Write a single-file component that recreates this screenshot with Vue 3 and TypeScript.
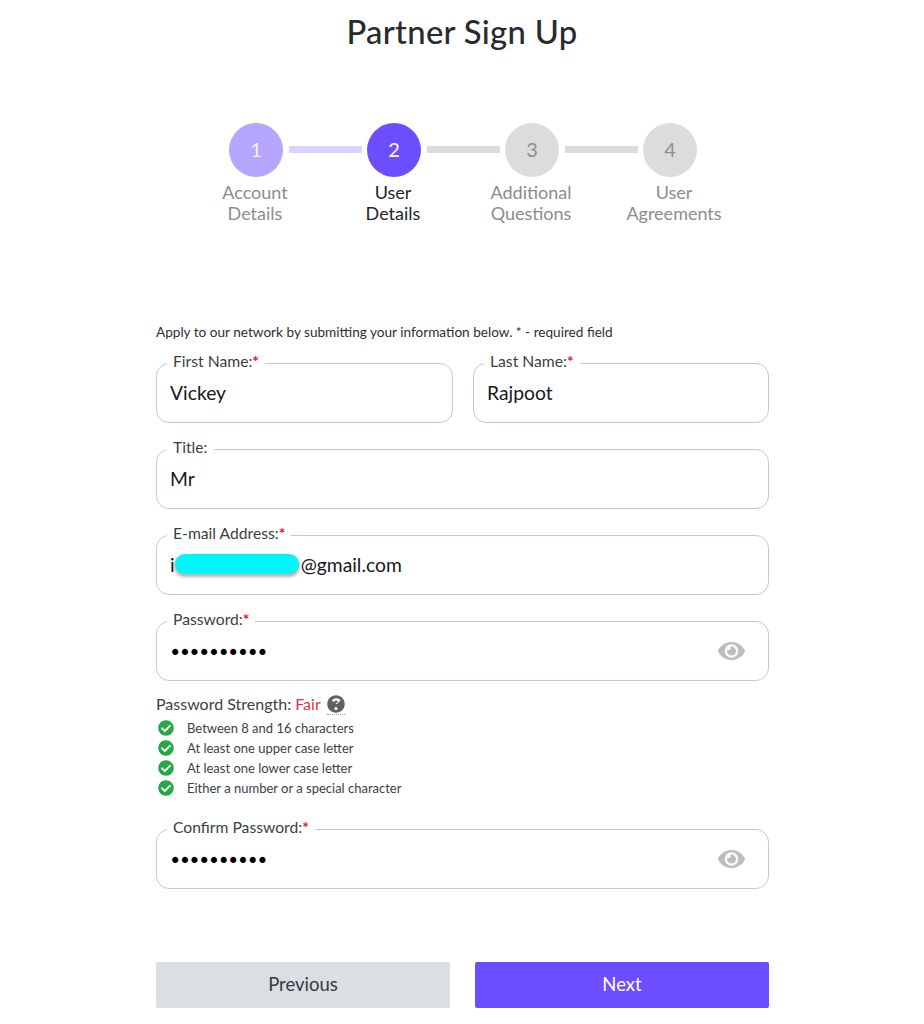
<script setup lang="ts">
const steps = [
  { n: 1, lines: ['Account', 'Details'], state: 'done' },
  { n: 2, lines: ['User', 'Details'], state: 'active' },
  { n: 3, lines: ['Additional', 'Questions'], state: 'todo' },
  { n: 4, lines: ['User', 'Agreements'], state: 'todo' },
]
const rules = [
  'Between 8 and 16 characters',
  'At least one upper case letter',
  'At least one lower case letter',
  'Either a number or a special character',
]
const eye = 'M572.5 241.4C518.3 135.6 410.9 64 288 64S57.7 135.6 3.5 241.4a32.4 32.4 0 0 0 0 29.2C57.7 376.4 165.1 448 288 448s230.3-71.6 284.5-177.4a32.4 32.4 0 0 0 0-29.2zM288 400a144 144 0 1 1 144-144 143.9 143.9 0 0 1-144 144zm0-240a95.3 95.3 0 0 0-25.3 3.8 47.9 47.9 0 0 1-66.9 66.9A95.8 95.8 0 1 0 288 160z'
</script>

<template>
  <main class="page">
    <h1 class="title">Partner Sign Up</h1>

    <div class="stepper">
      <div class="track">
        <template v-for="(s, i) in steps" :key="s.n">
          <span class="circle" :class="s.state">{{ s.n }}</span>
          <span v-if="i < 3" class="line" :class="{ first: i === 0 }"></span>
        </template>
      </div>
      <div class="labels">
        <div v-for="s in steps" :key="s.n" class="label" :class="[s.state, 'n' + s.n]">
          <div v-for="l in s.lines" :key="l">{{ l }}</div>
        </div>
      </div>
    </div>

    <form class="form" @submit.prevent>
      <p class="intro">Apply to our network by submitting your information below. * - required field</p>

      <div class="row two">
        <div class="field">
          <span class="legend">First Name:<b>*</b></span>
          <span class="value">Vickey</span>
        </div>
        <div class="field">
          <span class="legend">Last Name:<b>*</b></span>
          <span class="value">Rajpoot</span>
        </div>
      </div>

      <div class="field gap">
        <span class="legend">Title:</span>
        <span class="value">Mr</span>
      </div>

      <div class="field gap">
        <span class="legend">E-mail Address:<b>*</b></span>
        <span class="value">i<span class="redact"></span>@gmail.com</span>
      </div>

      <div class="field gap">
        <span class="legend">Password:<b>*</b></span>
        <span class="dots">••••••••••</span>
        <svg class="eye" viewBox="0 0 576 512"><path :d="eye" /></svg>
      </div>

      <div class="strength">
        Password Strength: <span class="fair">Fair</span>
        <span class="help">
          <svg viewBox="0 0 512 512"><path d="M504 256c0 137-111 248-248 248S8 393 8 256 119 8 256 8s248 111 248 248zM262.700 90c-54.500 0-89.300 23-116.500 63.800-3.500 5.300-2.400 12.400 2.700 16.300l34.700 26.300c5.200 3.900 12.600 3 16.700-2.100 17.900-22.700 30.100-35.800 57.300-35.800 20.400 0 45.700 13.100 45.700 33 0 15-12.400 22.700-32.600 34-23.600 13.200-54.800 29.700-54.800 70.900V240c0 0 0 0 0 0v6c0 6.600 5.400 12 12 12h56c6.600 0 12-5.400 12-12v-1.300c0-28.600 83.500-29.800 83.500-107.200C379.900 129.100 320.500 90 262.700 90zM256 338c-25.400 0-46 20.600-46 46s20.600 46 46 46 46-20.600 46-46-20.600-46-46-46z" /></svg>
        </span>
      </div>
      <ul class="rules">
        <li v-for="r in rules" :key="r">
          <svg viewBox="0 0 512 512"><path d="M504 256c0 137-111 248-248 248S8 393 8 256 119 8 256 8s248 111 248 248zM227.300 387.300l184-184c6.200-6.200 6.200-16.400 0-22.600l-22.600-22.600c-6.200-6.200-16.400-6.200-22.600 0L216 308.100l-70.100-70.100c-6.200-6.200-16.400-6.200-22.600 0l-22.600 22.600c-6.200 6.200-6.200 16.400 0 22.600l104 104c6.200 6.200 16.400 6.200 22.600 0z" /></svg>
          <span>{{ r }}</span>
        </li>
      </ul>

      <div class="field confirm">
        <span class="legend">Confirm Password:<b>*</b></span>
        <span class="dots">••••••••••</span>
        <svg class="eye" viewBox="0 0 576 512"><path :d="eye" /></svg>
      </div>

      <div class="actions">
        <button type="button" class="btn prev">Previous</button>
        <button type="button" class="btn next">Next</button>
      </div>
    </form>
  </main>
</template>

<style scoped>
.page {
  width: 924px;
  height: 1024px;
  overflow: hidden;
  background: #fff;
  font-family: "Lato", "Noto Sans", sans-serif;
  color: #212529;
  box-sizing: border-box;
}
.title {
  margin: 0;
  padding-top: 12px;
  height: 123px;
  box-sizing: border-box;
  text-align: center;
  font-size: 32.8px;
  line-height: 40px;
  font-weight: 500;
  color: #272b30;
  letter-spacing: 0.3px;
}
.track {
  display: flex;
  align-items: center;
  padding-left: 229px;
}
.circle {
  width: 54px;
  height: 54px;
  padding-bottom: 2px;
  box-sizing: border-box;
  border-radius: 50%;
  display: flex;
  align-items: center;
  justify-content: center;
  font-size: 20px;
  flex: none;
}
.circle.done { background: #b5a6ff; color: #f4f1ff; }
.circle.active { background: #6c4dff; color: #fff; }
.circle.todo { background: #dcdcdc; color: #8f8f8f; }
.line {
  width: 73px;
  height: 7px;
  margin: -1px 5px 0 6px;
  background: #dcdcdc;
}
.line.first { background: #dad3ff; }
.labels {
  display: grid;
  grid-template-columns: repeat(4, 138px);
  padding-left: 186px;
  margin-top: 5px;
  font-size: 18px;
  line-height: 21px;
  text-align: center;
  color: #8c8c8c;
}
.label.active { color: #212529; }
.label.n4 { padding-left: 10px; }
.form {
  width: 613px;
  margin: 99px 0 0 156px;
}
.intro {
  margin: 0 0 22px;
  font-size: 13.6px;
  line-height: 18px;
  color: #2b2f33;
}
.row.two {
  display: grid;
  grid-template-columns: 297px 296px;
  gap: 20px;
}
.field {
  position: relative;
  height: 60px;
  box-sizing: border-box;
  border: 1px solid #c3c8d6;
  border-radius: 13px;
  display: flex;
  align-items: center;
  padding: 0 13px;
}
.gap { margin-top: 26px; }
.legend {
  position: absolute;
  left: 10px;
  top: -13px;
  padding: 0 6px;
  background: #fff;
  font-size: 15.7px;
  line-height: 20px;
  color: #3a3f44;
}
.legend b {
  color: #f01010;
  font-weight: 700;
}
.value {
  font-size: 19.3px;
  color: #15181b;
  display: flex;
  align-items: center;
  white-space: pre;
  padding-bottom: 2px;
}
.redact {
  width: 124px;
  height: 20px;
  margin: 0 2px 0 0;
  border-radius: 10px;
  background: #00f6fb;
  box-shadow: 0 2px 3px 1px rgba(90, 90, 90, 0.45);
}
.dots {
  font-family: "DejaVu Sans", sans-serif;
  font-size: 21px;
  letter-spacing: -2.7px;
  line-height: 20px;
  color: #000;
  margin-left: -1px;
  padding-top: 3px;
}
.eye {
  position: absolute;
  right: 23px;
  top: 17px;
  width: 27px;
  height: 24px;
  fill: #bdbdbd;
}
.strength {
  margin-top: 13px;
  height: 20px;
  display: flex;
  align-items: center;
  gap: 4px;
  font-size: 16px;
  line-height: 20px;
  color: #3a3f44;
}
.fair { color: #dc3545; }
.help {
  margin-left: 2px;
  height: 20px;
  display: flex;
  align-items: center;
  border-bottom: 1px dotted #a0a6ab;
}
.help svg {
  width: 18px;
  height: 18px;
  fill: #5a6268;
}
.rules {
  list-style: none;
  margin: 4px 0 0;
  padding: 0;
}
.rules li {
  height: 20px;
  display: flex;
  align-items: center;
  font-size: 13px;
  color: #3a3f44;
}
.rules svg {
  width: 16px;
  height: 16px;
  margin-left: 2px;
  margin-right: 13px;
  fill: #28a745;
  flex: none;
}
.confirm { margin-top: 31px; }
.actions {
  display: grid;
  grid-template-columns: 294px 294px;
  gap: 25px;
  margin-top: 73px;
}
.btn {
  height: 46px;
  border: 0;
  border-radius: 2px;
  padding: 0 0 2px;
  font: inherit;
  font-size: 18.5px;
}
.prev { background: #d9dfe3; color: #343a40; }
.next { background: #6c4dff; color: #fff; }
</style>
